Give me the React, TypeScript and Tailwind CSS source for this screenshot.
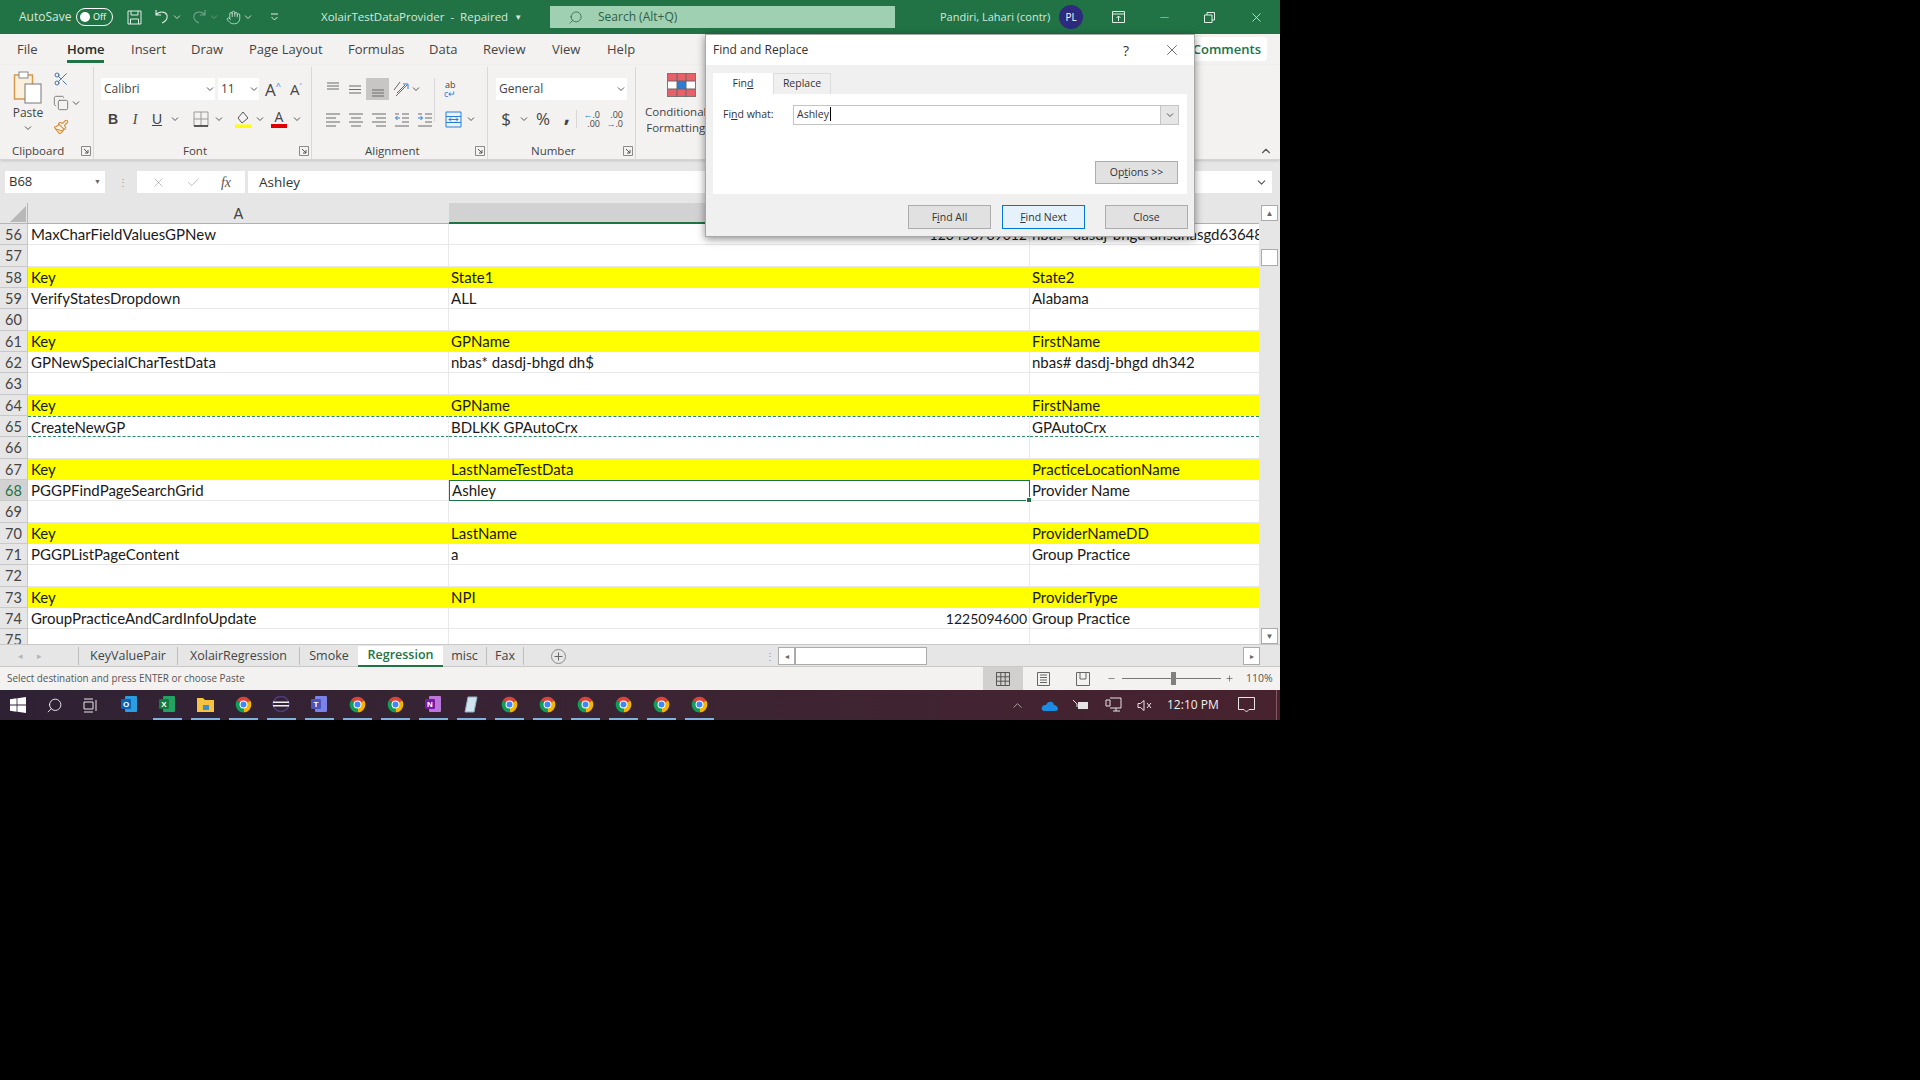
import React from "react";
import { ChevronDown, ChevronUp, Scissors, Copy, Paintbrush, Search, X, Check, Plus, Minus, Hand } from "lucide-react";

const ui = { fontFamily: '"Open Sans", "Noto Sans", sans-serif' };
const cal = { fontFamily: 'Lato, "Noto Sans", sans-serif' };

const Chev = ({ c = "#555" }: { c?: string }) => (
  <svg width="8" height="6" viewBox="0 0 8 6" className="shrink-0"><path d="M1 1.5 L4 4.5 L7 1.5" fill="none" stroke={c} strokeWidth="1" /></svg>
);

const Lines = ({ kind }: { kind: "left" | "center" | "right" | "outdent" | "indent" | "vtop" | "vmid" | "vbot" }) => {
  const d: Record<string, string> = {
    left: "M1 3H15M1 7H11M1 11H15M1 15H11",
    center: "M1 3H15M3 7H13M1 11H15M3 15H13",
    right: "M1 3H15M5 7H15M1 11H15M5 15H15",
    vtop: "M2 2H14M2 5H14M2 8H14",
    vmid: "M2 5H14M2 8.5H14M2 12H14",
    vbot: "M2 9H14M2 12H14M2 15H14",
    outdent: "M8 3H15M8 7H15M8 11H15M1 15H15M1 3H5",
    indent: "M8 3H15M8 7H15M8 11H15M1 15H15M1 3H5",
  };
  return (
    <svg width="16" height="17" viewBox="0 0 16 17">
      <path d={d[kind]} stroke="#6b6b6b" strokeWidth="1" fill="none" />
      {kind === "outdent" && <path d="M6 7H1.5M3.5 5L1.5 7L3.5 9" stroke="#2b7cd3" fill="none" />}
      {kind === "indent" && <path d="M1 7H5.5M3.5 5L5.5 7L3.5 9" stroke="#2b7cd3" fill="none" />}
    </svg>
  );
};

const Launcher = () => (
  <svg width="10" height="10" viewBox="0 0 10 10"><path d="M0.5 0.5H9.5V9.5H0.5Z" fill="none" stroke="#8a8a8a" /><path d="M3 3L7 7M7 4V7H4" stroke="#555" fill="none" /></svg>
);

const Chrome = () => (
  <svg width="17" height="17" viewBox="0 0 24 24">
    <path d="M12 12 L2.47 6.5 A11 11 0 0 1 21.53 6.5 Z" fill="#db4437" />
    <path d="M12 12 L21.53 6.5 A11 11 0 0 1 12 23 Z" fill="#f4b400" />
    <path d="M12 12 L12 23 A11 11 0 0 1 2.47 6.5 Z" fill="#0f9d58" />
    <circle cx="12" cy="12" r="5.6" fill="#fff" />
    <circle cx="12" cy="12" r="4.2" fill="#4285f4" />
  </svg>
);

const Logo = ({ bg, ch, page }: { bg: string; ch: string; page: string }) => (
  <svg width="18" height="18" viewBox="0 0 18 18">
    <rect x="5" y="1" width="12" height="16" rx="1" fill={page} />
    <rect x="1" y="4" width="10" height="10" rx="1" fill={bg} />
    <text x="6" y="12" fontSize="8" fontWeight="700" fill="#fff" textAnchor="middle" fontFamily="Liberation Sans, sans-serif">{ch}</text>
  </svg>
);

const TaskSlot = ({ children, line = true }: { children: React.ReactNode; line?: boolean }) => (
  <div className="w-[38px] h-[30px] flex flex-col items-center">
    <div className="h-[28px] flex items-center justify-center">{children}</div>
    <div className={"w-[29px] h-[2px] " + (line ? "bg-[#7fb2dc]" : "bg-transparent")} />
  </div>
);

type R = { n: number; a?: string; b?: string; c?: string; y?: boolean; right?: boolean; ants?: boolean; sel?: boolean };
const rows: R[] = [
  { n: 56, a: "MaxCharFieldValuesGPNew", b: "123456789012", c: "nbas* dasdj-bhgd dhsdhasgd636487", right: true },
  { n: 57 },
  { n: 58, a: "Key", b: "State1", c: "State2", y: true },
  { n: 59, a: "VerifyStatesDropdown", b: "ALL", c: "Alabama" },
  { n: 60 },
  { n: 61, a: "Key", b: "GPName", c: "FirstName", y: true },
  { n: 62, a: "GPNewSpecialCharTestData", b: "nbas* dasdj-bhgd dh$", c: "nbas# dasdj-bhgd dh342" },
  { n: 63 },
  { n: 64, a: "Key", b: "GPName", c: "FirstName", y: true },
  { n: 65, a: "CreateNewGP", b: "BDLKK GPAutoCrx", c: "GPAutoCrx", ants: true },
  { n: 66 },
  { n: 67, a: "Key", b: "LastNameTestData", c: "PracticeLocationName", y: true },
  { n: 68, a: "PGGPFindPageSearchGrid", b: "Ashley", c: "Provider Name", sel: true },
  { n: 69 },
  { n: 70, a: "Key", b: "LastName", c: "ProviderNameDD", y: true },
  { n: 71, a: "PGGPListPageContent", b: "a", c: "Group Practice" },
  { n: 72 },
  { n: 73, a: "Key", b: "NPI", c: "ProviderType", y: true },
  { n: 74, a: "GroupPracticeAndCardInfoUpdate", b: "1225094600", c: "Group Practice", right: true },
  { n: 75 },
];

const Row = ({ r }: { r: R }) => {
  const bg = r.y ? "bg-[#ffff00] border-[#ffff00]" : "bg-white border-[#e8e8e8]";
  const line = r.y ? "" : "border-r border-[#e2e2e2]";
  const ants = r.ants ? "border-y border-dashed border-y-[#2a8a64]" : "border-b " + bg;
  return (
    <div className="flex h-[21.33px] shrink-0 text-[15px] leading-[21.5px] text-[#1a1a1a]" style={cal}>
      <div className={"w-[28px] shrink-0 text-center border-r border-b border-[#c8c8c8] text-[14.5px] " + (r.sel ? "bg-[#d2d2d2] text-[#1f7244]" : "bg-[#e6e6e6] text-[#444]")}>{r.n}</div>
      <div className={"w-[421px] shrink-0 px-[3px] whitespace-nowrap overflow-hidden " + bg + " " + line + " " + ants}>{r.a}</div>
      {r.sel ? (
        <div className="relative w-[581px] shrink-0 px-[2px] bg-white border-[1.5px] border-[#1f7244] leading-[19px]">
          {r.b}
          <div className="absolute right-[-3px] bottom-[-3px] w-[4px] h-[4px] bg-[#1f7244] border border-white box-content" />
        </div>
      ) : (
        <div className={"w-[581px] shrink-0 px-[2px] whitespace-nowrap overflow-hidden " + (r.right ? "text-right text-[14px] " : "") + bg + " " + line + " " + ants}>{r.b}</div>
      )}
      <div className={"w-[229px] shrink-0 px-[2px] overflow-hidden whitespace-nowrap " + bg + " " + ants}>{r.c}</div>
    </div>
  );
};

const SheetTab = ({ t, w, sep = true }: { t: string; w: string; sep?: boolean }) => (
  <div className={"h-[18px] flex items-center justify-center text-[12.5px] text-[#444] " + w + " " + (sep ? "border-r border-[#bdbdbd]" : "")}>{t}</div>
);

const Ribbon = () => (
  <div className="h-[95px] flex bg-[#f3f2f1] text-[#444] border-b border-[#d4d4d4] shadow-sm relative">
    {/* Clipboard */}
    <div className="w-[94px] shrink-0 flex flex-col border-r border-[#d8d8d8] mt-[2px]">
      <div className="flex flex-1">
        <div className="w-[52px] flex flex-col items-center pt-[3px] pl-[4px]">
          <svg width="30" height="34" viewBox="0 0 30 34">
            <rect x="1.5" y="5" width="18" height="24" fill="#fbf0dc" stroke="#d49a4a" strokeWidth="1.5" />
            <rect x="6" y="2" width="9" height="6" fill="#fff" stroke="#888" />
            <rect x="12" y="14" width="16" height="19" fill="#fff" stroke="#777" />
          </svg>
          <div className="text-[12px] leading-[16px] mt-[1px]" style={ui}>Paste</div>
          <div className="mt-[4px]"><Chev /></div>
        </div>
        <div className="flex flex-col items-start pt-[4px] gap-[8px] pl-[1px]">
          <Scissors size={16} className="text-[#3f6a9c]" strokeWidth={1.4} />
          <div className="flex items-center gap-[3px]"><Copy size={16} className="text-[#666]" strokeWidth={1.2} /><Chev /></div>
          <Paintbrush size={16} className="text-[#d98c2b]" strokeWidth={1.6} />
        </div>
      </div>
      <div className="h-[17px] flex items-center justify-between pl-[12px] pr-[2px] text-[11.5px]" style={ui}><span>Clipboard</span><Launcher /></div>
    </div>
    {/* Font */}
    <div className="w-[218px] shrink-0 flex flex-col border-r border-[#d8d8d8] mt-[2px] pl-[7px]">
      <div className="flex flex-1 flex-col">
        <div className="flex items-center h-[22px] mt-[11px] gap-[3px]">
          <div className="w-[114px] h-[22px] bg-white flex items-center justify-between pl-[3px] pr-[1px] text-[12px]" style={ui}>Calibri<Chev /></div>
          <div className="w-[41px] h-[22px] bg-white flex items-center justify-between pl-[3px] pr-[1px] text-[12px]" style={ui}>11<Chev /></div>
          <div className="ml-[3px] text-[17px] leading-none" style={ui}>A<span className="text-[9px] align-top text-[#2b7cd3]">^</span></div>
          <div className="ml-[6px] text-[15px] leading-none" style={ui}>A<span className="text-[9px] align-top text-[#2b7cd3]">˅</span></div>
        </div>
        <div className="flex items-center h-[22px] mt-[8px] text-[14px]" style={{ fontFamily: "Liberation Serif, serif" }}>
          <span className="ml-[1px] w-[22px] text-center font-bold" style={{ fontFamily: "Liberation Sans" }}>B</span>
          <span className="w-[22px] text-center italic">I</span>
          <span className="w-[22px] text-center underline" style={{ fontFamily: "Liberation Sans" }}>U</span>
          <span className="ml-[3px]"><Chev /></span>
          <svg className="ml-[14px]" width="16" height="16" viewBox="0 0 16 16"><path d="M1 1H15V15H1ZM8 1V15M1 8H15" fill="none" stroke="#999" /><path d="M1 15H15" stroke="#333" strokeWidth="1.5" /></svg>
          <span className="ml-[6px]"><Chev /></span>
          <svg className="ml-[11px]" width="18" height="18" viewBox="0 0 18 18"><path d="M9 2L14 8L8 13L4 8Z" fill="#f4f4f4" stroke="#555" /><rect x="1" y="14.5" width="16" height="3.5" fill="#ffff00" /></svg>
          <span className="ml-[4px]"><Chev /></span>
          <div className="ml-[7px] w-[16px] flex flex-col items-center">
            <span className="text-[14px] leading-[14px] text-[#444]" style={ui}>A</span>
            <span className="w-[16px] h-[3.5px] bg-[#e00000]" />
          </div>
          <span className="ml-[6px]"><Chev /></span>
        </div>
      </div>
      <div className="h-[17px] flex items-center justify-between pl-[82px] pr-[2px] text-[11.5px]" style={ui}><span>Font</span><Launcher /></div>
    </div>
    {/* Alignment */}
    <div className="w-[176px] shrink-0 flex flex-col border-r border-[#d8d8d8] mt-[2px] pl-[10px]">
      <div className="flex flex-1 flex-col">
        <div className="flex items-center h-[22px] mt-[11px]">
          <span className="w-[22px] flex justify-center"><Lines kind="vtop" /></span>
          <span className="w-[22px] flex justify-center"><Lines kind="vmid" /></span>
          <span className="w-[23px] h-[22px] bg-[#c8c6c4] flex justify-center items-center"><Lines kind="vbot" /></span>
          <svg className="ml-[3px]" width="18" height="18" viewBox="0 0 18 18"><path d="M2 10L8 2M5 13L13 5" stroke="#666" fill="none" /><path d="M4 16L15 5M11 4H16V9" stroke="#2b7cd3" fill="none" /></svg>
          <span className="ml-[2px]"><Chev /></span>
          <span className="w-px h-[44px] bg-[#d8d8d8] ml-[14px] mt-[22px]" />
          <span className="ml-[9px] text-[9px] leading-[9px] text-[#444] text-center" style={ui}>ab<br /><span className="text-[#2b7cd3]">c↵</span></span>
        </div>
        <div className="flex items-center h-[22px] mt-[8px]">
          <span className="w-[22px] flex justify-center"><Lines kind="left" /></span>
          <span className="w-[23px] flex justify-center"><Lines kind="center" /></span>
          <span className="w-[23px] flex justify-center"><Lines kind="right" /></span>
          <span className="w-[23px] flex justify-center"><Lines kind="outdent" /></span>
          <span className="w-[23px] flex justify-center"><Lines kind="indent" /></span>
          <svg className="ml-[9px]" width="17" height="17" viewBox="0 0 17 17"><path d="M1 1H16V16H1ZM1 5.5H16M1 11.5H16" fill="#eaf3fb" stroke="#2b7cd3" /><path d="M4 8.5H13M6 6.5L4 8.5L6 10.5M11 6.5L13 8.5L11 10.5" stroke="#2b7cd3" fill="none" /></svg>
          <span className="ml-[5px]"><Chev /></span>
        </div>
      </div>
      <div className="h-[17px] flex items-center justify-between pl-[43px] pr-[2px] text-[11.5px]" style={ui}><span>Alignment</span><Launcher /></div>
    </div>
    {/* Number */}
    <div className="w-[148px] shrink-0 flex flex-col border-r border-[#d8d8d8] mt-[2px] pl-[8px]">
      <div className="flex flex-1 flex-col">
        <div className="w-[131px] h-[22px] mt-[11px] bg-white flex items-center justify-between pl-[3px] pr-[2px] text-[12px]" style={ui}>General<Chev /></div>
        <div className="flex items-center h-[22px] mt-[8px]" style={ui}>
          <span className="ml-[4px] w-[12px] text-[17px] text-center">$</span>
          <span className="ml-[8px]"><Chev /></span>
          <span className="ml-[6px] w-[18px] text-[17px] text-center">%</span>
          <span className="ml-[9px] w-[12px] text-[22px] leading-[16px] font-bold text-center -translate-y-[6px]">,</span>
          <span className="ml-[3px] w-px h-[18px] bg-[#d8d8d8]" />
          <span className="ml-[3px] w-[20px] text-[9px] leading-[9px] text-right"><span className="text-[#2b7cd3]">←</span>.0<br />.00</span>
          <span className="ml-[3px] w-[20px] text-[9px] leading-[9px] text-right">.00<br /><span className="text-[#2b7cd3]">→</span>.0</span>
        </div>
      </div>
      <div className="h-[17px] flex items-center justify-between pl-[35px] pr-[2px] text-[11.5px]" style={ui}><span>Number</span><Launcher /></div>
    </div>
    {/* Styles */}
    <div className="flex-1 flex flex-col items-start pl-[9px] pt-[8px]">
      <svg className="ml-[22px]" width="29" height="24" viewBox="0 0 29 24">
        <rect x="0.5" y="0.5" width="28" height="23" fill="#fff" stroke="#777" />
        <rect x="1" y="1" width="27" height="7" fill="#e8606a" />
        <rect x="1" y="16" width="27" height="7" fill="#e8606a" />
        <rect x="10" y="8" width="9" height="8" fill="#2b7cd3" />
        <path d="M10 0V24M19 0V24M1 8H28M1 16H28" stroke="#666" />
      </svg>
      <div className="text-[11.5px] leading-[16px] mt-[7px] text-center" style={ui}>Conditional<br />Formatting</div>
    </div>
    <div className="absolute right-[7px] bottom-[1px]"><ChevronUp size={14} className="text-[#555]" /></div>
  </div>
);

const Dialog = () => (
  <div className="absolute left-[705px] top-[34px] w-[490px] h-[203px] bg-[#f0f0f0] border border-[#a8a8a8] shadow-[0_2px_8px_rgba(0,0,0,0.45)] flex flex-col text-[#333]" style={ui}>
    <div className="h-[30px] bg-white flex items-center pl-[7px] text-[12px] shrink-0">
      <span className="flex-1">Find and Replace</span>
      <span className="text-[14px] mr-[34px]">?</span>
      <X size={18} strokeWidth={1} className="mr-[13px] text-[#444]" />
    </div>
    <div className="flex pl-[7px] h-[22px] mt-[7px] pt-[1px] shrink-0 text-[10.5px]">
      <div className="w-[60px] bg-white flex items-center justify-center"><span>Fin<u>d</u></span></div>
      <div className="w-[58px] border border-b-0 border-[#dcdcdc] flex items-center justify-center">Replace</div>
    </div>
    <div className="mx-[7px] h-[100px] bg-white shrink-0 flex flex-col pl-[10px] pr-[8px] text-[10.5px]">
      <div className="flex items-center mt-[11px] h-[20px]">
        <span className="w-[70px]">Fi<u>n</u>d what:</span>
        <div className="flex-1 h-[20px] border border-[#c4c4c4] flex items-center justify-between pl-[3px]">
          <span>Ashley<span className="border-l border-black ml-px" /></span>
          <div className="w-[18px] h-[18px] bg-[#e6e6e6] border-l border-[#c4c4c4] flex items-center justify-center"><Chev /></div>
        </div>
      </div>
      <div className="flex justify-end mt-[36px] pr-[1px]">
        <div className="w-[83px] h-[23px] pt-[1px] bg-[#e1e1e1] border border-[#adadad] flex items-center justify-center">Op<u>t</u>ions &gt;&gt;</div>
      </div>
    </div>
    <div className="flex justify-end pr-[6px] mt-[11px] text-[10.5px] leading-[16px]">
      <div className="w-[83px] h-[24px] bg-[#e1e1e1] border border-[#adadad] flex items-center justify-center">F<u>i</u>nd All</div>
      <div className="ml-[11px] w-[83px] h-[24px] bg-[#e5f1fb] border border-[#0078d7] flex items-center justify-center"><u>F</u>ind Next</div>
      <div className="ml-[20px] w-[83px] h-[24px] bg-[#e1e1e1] border border-[#adadad] flex items-center justify-center">Close</div>
    </div>
  </div>
);

export default function App() {
  return (
    <div className="w-[1920px] h-[1080px] bg-black overflow-hidden">
      <div className="relative w-[1280px] h-[720px] flex flex-col bg-[#e6e6e6]" style={ui}>
        {/* Title bar */}
        <div className="h-[34px] shrink-0 bg-[#217346] flex items-center text-[#d5e8dc] text-[12px]">
          <span className="ml-[19px] w-[57px]">AutoSave</span>
          <div className="w-[37px] h-[18px] rounded-full border border-white flex items-center pl-[3px] gap-[3px] text-[9px] text-white"><span className="w-[10px] h-[10px] rounded-full bg-white" />Off</div>
          <svg className="ml-[14px]" width="15" height="15" viewBox="0 0 15 15"><path d="M1 1H14V14H1ZM4 1V5H11V1M3.5 14V9H11.5V14" fill="none" stroke="#e0eee6" /></svg>
          <svg className="ml-[11px]" width="17" height="16" viewBox="0 0 17 16"><path d="M3 1V6H8M3 6C6 2 12 2 14 6C15 10 12 13 9 14" fill="none" stroke="#e0eee6" strokeWidth="1.1" /></svg>
          <span className="ml-[3px]"><Chev c="#c5dccd" /></span>
          <svg className="ml-[10px] opacity-40" width="17" height="16" viewBox="0 0 17 16"><path d="M14 1V6H9M14 6C11 2 5 2 3 6C2 10 5 13 8 14" fill="none" stroke="#e0eee6" strokeWidth="1.1" /></svg>
          <span className="ml-[2px] opacity-40"><Chev c="#c5dccd" /></span>
          <Hand size={15} strokeWidth={1.2} className="ml-[8px] text-[#e0eee6]" />
          <span className="ml-[3px]"><Chev c="#c5dccd" /></span>
          <svg className="ml-[18px]" width="9" height="8" viewBox="0 0 9 8"><path d="M1 1H8M1.5 4L4.5 7L7.5 4" fill="none" stroke="#e0eee6" /></svg>
          <span className="ml-[42px] w-[198px] shrink-0 flex items-center gap-[6px] whitespace-nowrap text-[11.5px]">XolairTestDataProvider &nbsp;-&nbsp; Repaired <span className="text-[8px]">▼</span></span>
          <div className="ml-[31px] w-[345px] h-[22px] shrink-0 bg-[#a0d0b2] flex items-center pl-[18px] text-[#2f5f45] text-[12px]">
            <Search size={15} strokeWidth={1.2} className="-scale-x-100" />
            <span className="ml-[15px]">Search (Alt+Q)</span>
          </div>
          <span className="ml-[45px] w-[115px] shrink-0 whitespace-nowrap text-[11px]">Pandiri, Lahari (contr)</span>
          <div className="ml-[4px] w-[24px] h-[24px] shrink-0 rounded-full bg-[#2e2a7d] text-white text-[10px] flex items-center justify-center">PL</div>
          <svg className="ml-[29px]" width="13" height="12" viewBox="0 0 13 12"><path d="M0.5 0.5H12.5V11.5H0.5ZM0.5 3H12.5M6.5 10V5M4.5 7L6.5 5L8.5 7" fill="none" stroke="#e0eee6" /></svg>
          <Minus size={13} strokeWidth={1} className="ml-[33px]" />
          <svg className="ml-[33px]" width="11" height="11" viewBox="0 0 11 11"><path d="M0.5 3H8V10.5H0.5ZM3 3V0.5H10.5V8H8" fill="none" stroke="#e0eee6" /></svg>
          <X size={15} strokeWidth={1.1} className="ml-[34px] text-white" />
        </div>
        {/* Ribbon tabs */}
        <div className="h-[31px] shrink-0 bg-[#f3f2f1] flex items-center text-[13px] text-[#444] relative">
          <span className="ml-[17px] w-[50px]">File</span>
          <span className="relative w-[64px] text-[#1f2f28] font-semibold">Home<span className="absolute left-0 top-[20px] w-[37px] h-[3px] bg-[#217346]" /></span>
          <span className="w-[60px]">Insert</span>
          <span className="w-[58px]">Draw</span>
          <span className="w-[99px]">Page Layout</span>
          <span className="w-[81px]">Formulas</span>
          <span className="w-[54px]">Data</span>
          <span className="w-[69px]">Review</span>
          <span className="w-[55px]">View</span>
          <span>Help</span>
          <div className="absolute right-[13px] top-[3px] h-[24px] w-[90px] bg-white flex items-center justify-end pr-[6px] pt-[1px] text-[13px] font-semibold text-[#217346] rounded-sm">Comments</div>
        </div>
        <Ribbon />
        {/* Formula bar */}
        <div className="h-[43px] shrink-0 bg-[#e6e6e6] flex items-center pt-[1px]">
          <div className="ml-[5px] w-[100px] h-[22px] bg-white flex items-center justify-between px-[4px] text-[13px] text-[#333]">B68<span className="text-[7px] text-[#666]">▼</span></div>
          <span className="ml-[13px] w-[4px] text-[10px] text-[#999] leading-[6px]">⋮</span>
          <div className="ml-[15px] w-[108px] h-[22px] bg-white flex items-center justify-around px-[4px]">
            <X size={15} strokeWidth={1.2} className="text-[#aaa]" />
            <Check size={15} strokeWidth={1.2} className="text-[#aaa]" />
            <span className="text-[14px] italic text-[#555]" style={{ fontFamily: "Liberation Serif, serif" }}>fx</span>
          </div>
          <div className="ml-[3px] w-[1024px] h-[22px] bg-white flex items-center justify-between pl-[11px] pr-[4px] text-[13.5px] text-[#333]">
            Ashley<ChevronDown size={13} className="text-[#555]" />
          </div>
        </div>
        {/* Sheet */}
        <div className="h-[441px] shrink-0 flex">
          <div className="w-[1259px] shrink-0 flex flex-col">
            <div className="h-[21px] flex bg-[#e6e6e6] shrink-0 text-[14.5px] leading-[22px] text-[#444]" style={cal}>
              <div className="w-[28px] shrink-0 flex items-end justify-end pr-[1px] pb-[1px] border-r border-b border-[#b5b5b5]">
                <svg width="16" height="16" viewBox="0 0 16 16"><path d="M16 0V16H0Z" fill="#b8b8b8" /></svg>
              </div>
              <div className="w-[421px] shrink-0 text-center border-b border-[#b0b0b0]">A</div>
              <div className="w-[581px] shrink-0 bg-[#d2d2d2] border-b-2 border-[#1f7244]" />
              <div className="w-[229px] shrink-0 border-b border-[#b0b0b0]" />
            </div>
            <div className="h-[420px] overflow-hidden flex flex-col bg-white">
              {rows.map((r) => <Row key={r.n} r={r} />)}
            </div>
          </div>
          <div className="w-[21px] shrink-0 flex flex-col items-center pt-[2px] bg-[#e6e6e6]">
            <div className="w-[17px] h-[16px] bg-white border border-[#ababab] flex items-center justify-center text-[8px] text-[#666]">▲</div>
            <div className="mt-[28px] w-[17px] h-[17px] bg-white border border-[#ababab]" />
            <div className="mt-auto w-[17px] h-[16px] bg-white border border-[#ababab] flex items-center justify-center text-[8px] text-[#666]">▼</div>
          </div>
        </div>
        {/* Sheet tabs */}
        <div className="h-[23px] shrink-0 pt-[1px] bg-[#e6e6e6] flex items-center border-b border-[#c8c8c8] border-t border-t-[#c8c8c8]">
          <div className="w-[79px] h-[18px] flex items-center gap-[14px] pl-[18px] border-r border-[#bdbdbd] text-[9px] text-[#b5b5b5]"><span>◂</span><span>▸</span></div>
          <SheetTab t="KeyValuePair" w="w-[99px]" />
          <SheetTab t="XolairRegression" w="w-[122px]" />
          <SheetTab t="Smoke" w="w-[58px]" sep={false} />
          <div className="h-[21px] w-[85px] bg-white border-b-2 border-[#217346] flex items-center justify-center text-[12.5px] font-semibold text-[#217346]">Regression</div>
          <SheetTab t="misc" w="w-[44px]" />
          <SheetTab t="Fax" w="w-[37px]" />
          <svg className="ml-[27px]" width="15" height="15" viewBox="0 0 15 15"><circle cx="7.5" cy="7.5" r="7" fill="none" stroke="#8a8a8a" /><path d="M7.5 3.5V11.5M3.5 7.5H11.5" stroke="#666" /></svg>
          <span className="ml-[199px] w-[4px] text-[10px] text-[#999]">⋮</span>
          <div className="ml-[9px] w-[17px] h-[18px] bg-white border border-[#ababab] flex items-center justify-center text-[8px] text-[#666]">◂</div>
          <div className="w-[132px] h-[18px] bg-white border border-[#ababab]" />
          <div className="ml-[316px] w-[17px] h-[18px] bg-white border border-[#ababab] flex items-center justify-center text-[8px] text-[#666]">▸</div>
        </div>
        {/* Status bar */}
        <div className="h-[23px] shrink-0 bg-[#f3f2f1] flex items-center text-[9.9px] text-[#555]">
          <span className="ml-[7px] w-[976px] shrink-0">Select destination and press ENTER or choose Paste</span>
          <div className="w-[40px] h-[23px] bg-[#d2d0ce] flex items-center justify-center">
            <svg width="14" height="14" viewBox="0 0 14 14"><path d="M0.5 0.5H13.5V13.5H0.5ZM4.8 0.5V13.5M9.2 0.5V13.5M0.5 4.8H13.5M0.5 9.2H13.5" fill="none" stroke="#555" /></svg>
          </div>
          <div className="w-[40px] flex justify-center">
            <svg width="13" height="14" viewBox="0 0 13 14"><path d="M0.5 0.5H12.5V13.5H0.5ZM3 3H10M3 5.5H10M3 8H10M3 10.5H10" fill="none" stroke="#666" /></svg>
          </div>
          <div className="w-[40px] flex justify-center">
            <svg width="14" height="14" viewBox="0 0 14 14"><path d="M0.5 0.5H13.5V13.5H0.5ZM4 0.5V7H10V0.5" fill="none" stroke="#666" /></svg>
          </div>
          <Minus size={9} className="ml-[4px] text-[#666]" />
          <div className="ml-[6px] w-[99px] h-px bg-[#777] relative"><div className="absolute left-[49px] top-[-6px] w-[5px] h-[13px] bg-[#808080]" /></div>
          <Plus size={9} className="ml-[4px] text-[#666]" />
          <span className="ml-[12px] text-[10.5px]">110%</span>
        </div>
        {/* Taskbar */}
        <div className="h-[30px] shrink-0 flex items-center bg-gradient-to-r from-[#2f2134] via-[#3a2433] to-[#48222f]">
          <div className="w-[36px] flex justify-center">
            <svg width="16" height="16" viewBox="0 0 16 16"><path d="M0 2.2L6.6 1.3V7.6H0ZM7.4 1.2L16 0V7.6H7.4ZM0 8.4H6.6V14.7L0 13.8ZM7.4 8.4H16V16L7.4 14.8Z" fill="#fff" /></svg>
          </div>
          <div className="w-[36px] flex justify-center"><Search size={17} strokeWidth={1.2} className="text-white -scale-x-100" /></div>
          <div className="w-[36px] flex justify-center">
            <svg width="15" height="15" viewBox="0 0 15 15"><path d="M1 1H10M1 14H10M1 4H10V11H1ZM13 2V13" fill="none" stroke="#e8e8e8" /></svg>
          </div>
          <div className="ml-[2px]"><TaskSlot line={false}><Logo bg="#0a63b8" ch="O" page="#2a9fe0" /></TaskSlot></div>
          <TaskSlot><Logo bg="#107c41" ch="X" page="#21a366" /></TaskSlot>
          <TaskSlot>
            <svg width="17" height="15" viewBox="0 0 17 15"><path d="M0 1H6L8 3H17V15H0Z" fill="#f5c242" /><rect x="6" y="8" width="6" height="5" fill="#3a8fd6" /></svg>
          </TaskSlot>
          <TaskSlot><Chrome /></TaskSlot>
          <TaskSlot>
            <svg width="18" height="16" viewBox="0 0 18 16"><ellipse cx="9" cy="8" rx="8" ry="7.5" fill="none" stroke="#4b3f7e" strokeWidth="1.5" /><rect x="1" y="5.5" width="16" height="1.5" fill="#f0f0f0" /><rect x="1" y="9" width="16" height="1.5" fill="#f0f0f0" /></svg>
          </TaskSlot>
          <TaskSlot><Logo bg="#4b53bc" ch="T" page="#7b83eb" /></TaskSlot>
          <TaskSlot><Chrome /></TaskSlot>
          <TaskSlot><Chrome /></TaskSlot>
          <TaskSlot><Logo bg="#7719aa" ch="N" page="#ba77d9" /></TaskSlot>
          <TaskSlot>
            <svg width="14" height="17" viewBox="0 0 14 17"><path d="M4 1H13L10 16H1Z" fill="#cfe4ee" stroke="#8fb2c4" /></svg>
          </TaskSlot>
          <TaskSlot><Chrome /></TaskSlot>
          <TaskSlot><Chrome /></TaskSlot>
          <TaskSlot><Chrome /></TaskSlot>
          <TaskSlot><Chrome /></TaskSlot>
          <TaskSlot><Chrome /></TaskSlot>
          <TaskSlot><Chrome /></TaskSlot>
          <ChevronUp size={15} strokeWidth={1} className="ml-[292px] text-[#e5e5e5]" />
          <svg className="ml-[16px]" width="17" height="11" viewBox="0 0 17 11"><path d="M4 11C1 11 0 9 1 7C2 5 4 5 5 5C6 2 9 1 11 2C13 3 13 5 13 5C15 5 17 7 17 9C17 10 16 11 14 11Z" fill="#1b8ce3" /></svg>
          <svg className="ml-[14px]" width="16" height="12" viewBox="0 0 16 12"><rect x="6" y="3" width="10" height="7" fill="#e5e5e5" /><path d="M1 1L5 5V8" stroke="#e5e5e5" fill="none" /></svg>
          <svg className="ml-[17px]" width="17" height="16" viewBox="0 0 17 16"><path d="M5 1H16V11H5M1 3H5V9H1ZM8 14H15M11 11V14" fill="none" stroke="#e5e5e5" /></svg>
          <svg className="ml-[15px]" width="16" height="13" viewBox="0 0 16 13"><path d="M1 4.5H3.5L7 1.5V11.5L3.5 8.5H1ZM10 4L14 9M14 4L10 9" fill="none" stroke="#e5e5e5" /></svg>
          <span className="ml-[14px] w-[52px] text-[12px] text-[#f0f0f0] whitespace-nowrap">12:10 PM</span>
          <svg className="ml-[19px]" width="17" height="16" viewBox="0 0 17 16"><path d="M0.5 0.5H16.5V12.5H11L8.5 15L6 12.5H0.5Z" fill="none" stroke="#e5e5e5" /></svg>
          <span className="ml-[21px] w-px h-[30px] bg-[#8a5a66]" />
        </div>
        <Dialog />
      </div>
    </div>
  );
}
